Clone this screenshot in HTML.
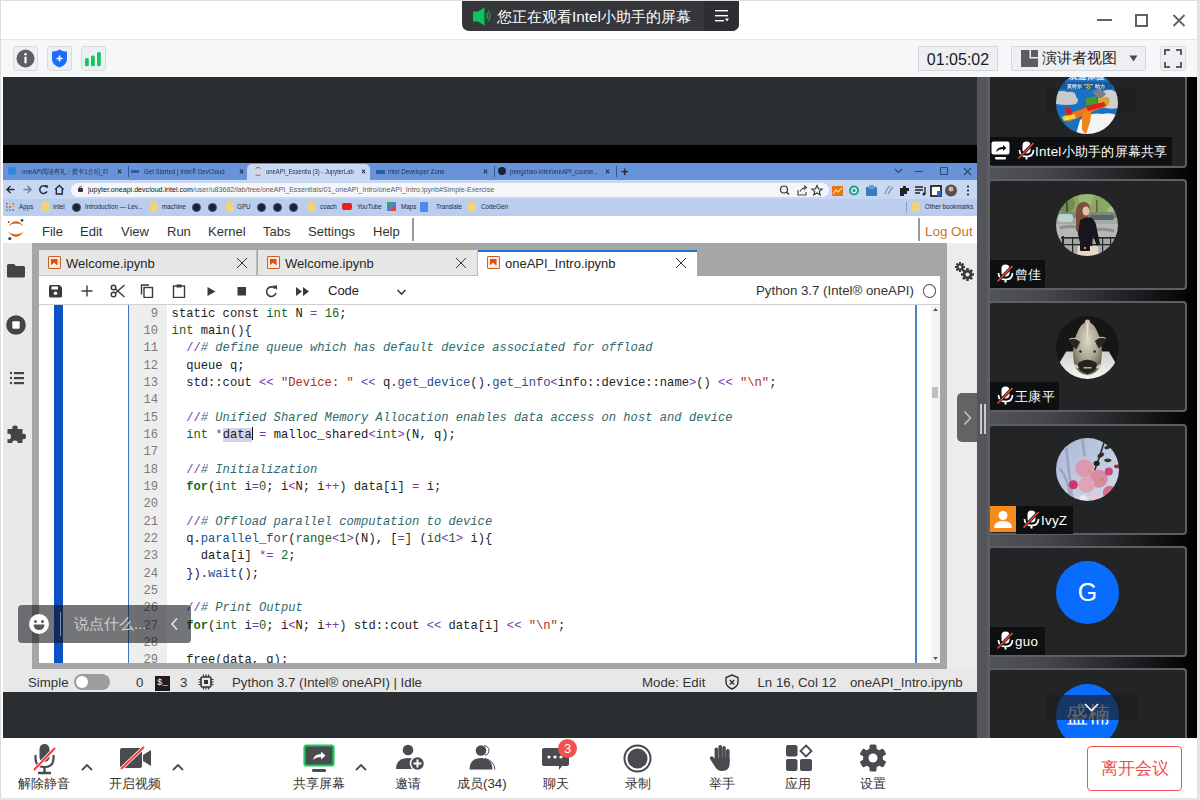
<!DOCTYPE html>
<html><head><meta charset="utf-8">
<style>
*{box-sizing:border-box}
html,body{margin:0;padding:0;width:1200px;height:800px;overflow:hidden;background:#fff;font-family:"Liberation Sans",sans-serif}
.a{position:absolute}
svg{display:block}
.tx{font-size:7.1px;line-height:14px;white-space:nowrap;overflow:hidden;transform:scaleX(0.86);transform-origin:0 0}
.ux{font-size:7.1px;line-height:14px;white-space:nowrap}
.bx span{font-size:6.3px;line-height:14px;color:#1d2a40;white-space:nowrap}
.fo{top:2px;width:8px;height:10px;background:#f0d27e;border-radius:1.5px}
.gl{top:3px;width:9px;height:9px;background:#1c2333;border-radius:50%;border:1px solid #3b4a66}
.mn{font-size:13px;line-height:16px;color:#333;white-space:nowrap}
.tb{font-size:13px;line-height:16px;color:#262626;white-space:nowrap}
.nb{width:13px;height:13px;background:#fbe9dc;border:1.5px solid #c4622c;border-radius:1px}
.nb::after{content:"";position:absolute;left:1.5px;top:1.5px;width:7px;height:7px;background:#e2500f;clip-path:polygon(0 0,100% 0,100% 100%,50% 62%,0 100%)}
.tbx{width:10px;height:10px;background:linear-gradient(45deg,transparent 45.5%,#333 45.5%,#333 54.5%,transparent 54.5%),linear-gradient(-45deg,transparent 45.5%,#333 45.5%,#333 54.5%,transparent 54.5%)}
.st{font-size:13.25px;line-height:16px;color:#333;white-space:nowrap}
.ln{height:17.35px;line-height:17.35px;font-family:"Liberation Mono",monospace;font-size:12.15px;white-space:pre;position:relative;color:#222}
.nu{position:absolute;left:0;width:29px;text-align:right;color:#7a7a7a}
.cd{position:absolute;left:42.6px}
.k{color:#146c28;font-weight:bold}.b{color:#156326}.o{color:#7a36b3}.n{color:#186226}.c{color:#33696d;font-style:italic}.s{color:#a8322a}.p{color:#1c4f96}.sel{background:#d5d3ea}.cur{display:inline-block;width:1px;height:13px;background:#111;vertical-align:-2px;margin-right:-1px}
.tile{left:11px;width:199px;height:111px;border:2px solid #5d5f63;border-radius:4px;background:#232426}
.lab{height:28px;background:#0e0f10}
.nm{font-size:13.4px;letter-spacing:0.25px;line-height:20px;color:#fff;white-space:nowrap}
.mic{width:18px;height:20px}
.bl{font-size:13.3px;line-height:18px;color:#333;white-space:nowrap}


</style></head><body>
<div class="a" style="left:0;top:0;width:1200px;height:800px;overflow:hidden">

<!-- frame borders -->
<div class="a" style="left:0;top:0;width:1200px;height:1px;background:#dedede"></div>
<div class="a" style="left:0;top:0;width:1px;height:800px;background:#dcdcdc"></div>
<div class="a" style="left:1197px;top:0;width:3px;height:800px;background:#e4e4e4"></div>
<div class="a" style="left:0;top:798px;width:1200px;height:2px;background:#e4e4e4"></div>

<!-- title bar -->
<div class="a" style="left:462px;top:1px;width:277px;height:30px;background:#35373b;border-radius:0 0 7px 7px;overflow:hidden">
  <div class="a" style="left:242px;top:0;width:35px;height:30px;background:#2c2e31"></div>
</div>
<svg class="a" style="left:470px;top:5px" width="26" height="22" viewBox="0 0 26 22">
  <path d="M3 6.5h5l6.5-4v18l-6.5-4H3z" fill="#0dc35c"/>
  <path d="M16.5 8q2 3 0 6M18 6q4 5 0 10" stroke="#0f9a4c" stroke-width="1.5" fill="none"/>
</svg>
<div class="a" style="left:497px;top:7px;font-size:15.3px;line-height:20px;color:#fff;white-space:nowrap">您正在观看Intel小助手的屏幕</div>
<svg class="a" style="left:714px;top:9px" width="16" height="14" viewBox="0 0 16 14">
  <rect x="1" y="1" width="13" height="1.4" fill="#fff"/>
  <rect x="1" y="6" width="13" height="1.4" fill="#fff"/>
  <rect x="1" y="11" width="9" height="1.4" fill="#fff"/>
  <path d="M11 9.5h4l-2 3z" fill="#fff"/>
</svg>

<!-- window controls -->
<div class="a" style="left:1097px;top:19px;width:15px;height:2px;background:#5f6166"></div>
<div class="a" style="left:1135px;top:14px;width:13px;height:13px;border:2px solid #5f6166"></div>
<svg class="a" style="left:1172px;top:14px" width="14" height="13" viewBox="0 0 14 13">
  <path d="M1.5 1l11 11M12.5 1l-11 11" stroke="#5f6166" stroke-width="1.8"/>
</svg>

<!-- top separator & toolbar -->
<div class="a" style="left:1px;top:39px;width:1196px;height:1px;background:#e6e6e8"></div>
<div class="a" style="left:1px;top:40px;width:1196px;height:37px;background:#f6f7f9"></div>

<!-- toolbar buttons -->
<div class="a" style="left:13px;top:46px;width:25px;height:25px;background:#eeeff2;border:1px solid #dadbdf;border-radius:3px"></div>
<svg class="a" style="left:16px;top:49px" width="19" height="19" viewBox="0 0 19 19">
  <circle cx="9.5" cy="9.5" r="9" fill="#5d5e62"/>
  <circle cx="9.5" cy="5.2" r="1.3" fill="#fff"/>
  <rect x="8.4" y="7.6" width="2.2" height="7" rx="1" fill="#fff"/>
</svg>
<div class="a" style="left:47px;top:46px;width:25px;height:25px;background:#eeeff2;border:1px solid #dadbdf;border-radius:3px"></div>
<svg class="a" style="left:51px;top:49px" width="17" height="19" viewBox="0 0 17 19">
  <path d="M8.5 0.5Q5 3 1 2.5V10Q1 16 8.5 18.5Q16 16 16 10V2.5Q12 3 8.5 0.5z" fill="#1a6eff"/>
  <path d="M8.5 6.5v6M5.5 9.5h6" stroke="#fff" stroke-width="1.6"/>
</svg>
<div class="a" style="left:81px;top:46px;width:25px;height:25px;background:#eeeff2;border:1px solid #dadbdf;border-radius:3px"></div>
<svg class="a" style="left:84px;top:51px" width="18" height="16" viewBox="0 0 18 16">
  <rect x="1" y="7" width="3.8" height="8.3" rx="1.5" fill="#0fc862"/>
  <rect x="7" y="4.5" width="3.8" height="10.8" rx="1.5" fill="#0fc862"/>
  <rect x="13" y="1" width="3.8" height="14.3" rx="1.5" fill="#0fc862"/>
</svg>

<div class="a" style="left:918px;top:46px;width:80px;height:25px;background:#eeeff2;border:1px solid #d6d7db"></div>
<div class="a" style="left:918px;top:50px;width:80px;text-align:center;font-size:16px;line-height:20px;color:#1b1b1b">01:05:02</div>

<div class="a" style="left:1011px;top:46px;width:135px;height:25px;background:#eeeff2;border:1px solid #d6d7db;border-radius:2px"></div>
<svg class="a" style="left:1021px;top:50px" width="17" height="17" viewBox="0 0 17 17">
  <path d="M0 0h8.5v8.5H17V17H0z" fill="#5c5d61"/>
  <rect x="10" y="0" width="7" height="7" fill="#5c5d61"/>
</svg>
<div class="a" style="left:1042px;top:48px;font-size:15.4px;line-height:20px;color:#1b1b1b;white-space:nowrap">演讲者视图</div>
<svg class="a" style="left:1129px;top:55px" width="9" height="7" viewBox="0 0 9 7"><path d="M0.5 0.5h8l-4 6z" fill="#4a4b4f"/></svg>

<div class="a" style="left:1160px;top:46px;width:26px;height:25px;background:#eeeff2;border:1px solid #dcdde0;border-radius:3px"></div>
<svg class="a" style="left:1164px;top:49px" width="18" height="19" viewBox="0 0 18 19">
  <path d="M1 6V1h5M12 1h5v5M17 13v5h-5M6 18H1v-5" stroke="#5c5d61" stroke-width="2" fill="none"/>
</svg>

<!-- main dark area -->
<div class="a" style="left:3px;top:77px;width:974px;height:661px;background:#2b2e31"></div>

<!-- SHARED SCREEN -->
<div id="share" class="a" style="left:3px;top:145px;width:974px;height:547px;overflow:hidden;background:#000">
<!-- black band -->
<div class="a" style="left:0;top:0;width:974px;height:18px;background:#000"></div>
<!-- tab strip -->
<div class="a" style="left:0;top:18px;width:974px;height:17px;background:#6893d8"></div>
<div class="a" style="left:244px;top:19px;width:123px;height:17px;background:#c9d9f3;border-radius:5px 5px 0 0"></div>
<div class="a tt" style="left:5px;top:22px;width:8px;height:8px;border-radius:2px;background:#2f8ad6"></div>
<div class="a tx" style="left:19px;top:20px;width:100px;color:#23324d">oneAPI阅读有礼：类卡1介绍_叫...</div>
<div class="a tx" style="left:114px;top:20px;color:#1d2a40;font-weight:bold">✕</div>
<div class="a" style="left:125px;top:21px;width:1px;height:11px;background:#38598f"></div>
<div class="a" style="left:128px;top:25px;width:8px;height:3px;background:#2a5ea8"></div>
<div class="a tx" style="left:141px;top:20px;color:#23324d">Get Started | Intel® DevCloud</div>
<div class="a tx" style="left:236px;top:20px;color:#1d2a40;font-weight:bold">✕</div>
<div class="a" style="left:251px;top:22px;width:8px;height:9px;border-radius:50%;border:1.6px solid #e0601f;border-left-color:transparent;border-right-color:transparent"></div>
<div class="a tx" style="left:263px;top:20px;width:112px;color:#1e2a3c;transform:scaleX(0.825)">oneAPI_Essentia (3) - JupyterLab</div>
<div class="a tx" style="left:358px;top:20px;color:#1d2a40;font-weight:bold">✕</div>
<div class="a" style="left:373px;top:25px;width:9px;height:4px;background:#2a5ea8"></div>
<div class="a tx" style="left:385px;top:20px;color:#23324d">Intel Developer Zone</div>
<div class="a tx" style="left:480px;top:20px;color:#1d2a40;font-weight:bold">✕</div>
<div class="a" style="left:491px;top:21px;width:1px;height:11px;background:#38598f"></div>
<div class="a" style="left:495px;top:22px;width:8px;height:8px;border-radius:50%;background:#1c2333"></div>
<div class="a tx" style="left:507px;top:20px;width:101px;color:#23324d">pengzhao-intel/oneAPI_course...</div>
<div class="a tx" style="left:602px;top:20px;color:#1d2a40;font-weight:bold">✕</div>
<div class="a" style="left:613px;top:21px;width:1px;height:11px;background:#38598f"></div>
<div class="a" style="left:618px;top:18px;font-size:13px;line-height:17px;color:#1d2a40;font-weight:bold">+</div>
<svg class="a" style="left:891px;top:23px" width="9" height="6" viewBox="0 0 9 6"><path d="M1 1l3.5 3.5L8 1" stroke="#2b4470" stroke-width="1.1" fill="none"/></svg>
<div class="a" style="left:912px;top:26px;width:8px;height:1px;background:#2b4470"></div>
<div class="a" style="left:937px;top:22px;width:8px;height:8px;border:1.3px solid #2b4470;border-radius:1px"></div>
<svg class="a" style="left:960px;top:22px" width="9" height="9" viewBox="0 0 9 9"><path d="M1 1l7 7M8 1l-7 7" stroke="#2b4470" stroke-width="1.1"/></svg>

<!-- address row -->
<div class="a" style="left:0;top:35px;width:974px;height:19px;background:#c9d8f2"></div>
<svg class="a" style="left:3px;top:38px" width="70" height="13" viewBox="0 0 70 13">
  <path d="M8.5 6.5H1M4.5 3L1 6.5 4.5 10" stroke="#1f2b3d" stroke-width="1.4" fill="none"/>
  <path d="M17.5 6.5h7M21.5 3l3.5 3.5L21.5 10" stroke="#6f7d93" stroke-width="1.4" fill="none"/>
  <path d="M40.5 4.2A3.8 3.8 0 1 0 41 8.3" stroke="#1f2b3d" stroke-width="1.5" fill="none"/><path d="M38.6 2.3h3.2v3.2z" fill="#1f2b3d"/>
  <path d="M49 6.5L53.3 2.5 57.6 6.5M50.3 5.5v5.5h6V5.5" stroke="#1f2b3d" stroke-width="1.4" fill="none"/>
</svg>
<div class="a" style="left:68px;top:38px;width:758px;height:14px;background:#f5f6f9;border-radius:7px"></div>
<div class="a" style="left:75px;top:43px;width:5px;height:4px;background:#333;border-radius:1px"></div>
<div class="a" style="left:75.8px;top:40.5px;width:3.4px;height:4px;border:1.1px solid #333;border-radius:2px 2px 0 0"></div>
<div class="a ux" style="left:85px;top:38px"><span style="color:#111">jupyter.oneapi.devcloud.intel.com</span><span style="color:#5b5f66">/user/u83682/lab/tree/oneAPI_Essentials/01_oneAPI_Intro/oneAPI_Intro.ipynb#Simple-Exercise</span></div>
<svg class="a" style="left:775px;top:39px" width="180" height="13" viewBox="0 0 180 13">
  <circle cx="6" cy="5.5" r="3.5" stroke="#333" stroke-width="1.2" fill="none"/><path d="M8.5 8l2.5 2.5" stroke="#333" stroke-width="1.4"/>
  <path d="M20 6v5h8V8M22 7.5q2-4 6.5-4M26 1.5l2.5 2-2.5 2" stroke="#444" stroke-width="1.1" fill="none"/>
  <path d="M39 1.5l1.5 3.3 3.6.3-2.8 2.3.9 3.5-3.2-1.9-3.2 1.9.9-3.5-2.8-2.3 3.6-.3z" stroke="#333" stroke-width="1.1" fill="none"/>
  <rect x="54" y="2" width="11" height="10" fill="#e8741c"/><path d="M55 10l3-4 2 2 4-4" stroke="#ffd9a0" stroke-width="1.2" fill="none"/>
  <circle cx="76" cy="6.5" r="5" fill="#15a288"/><circle cx="76" cy="6.5" r="2.3" stroke="#fff" stroke-width="1.2" fill="none"/>
  <rect x="88" y="3" width="11" height="9" rx="1" fill="#3a7abf"/><rect x="91" y="1" width="5" height="4" fill="#5fa0dd"/>
  <path d="M107 10q2-6 5-8M110 10q3-5 5-7" stroke="#7a8fb3" stroke-width="1.3" fill="none"/>
  <path d="M122 4h3v-2h3v2h3v3h-2v3h-3v2h-4z" fill="#222"/>
  <path d="M137 3h8M137 6h8M137 9h5M147 3v7" stroke="#222" stroke-width="1.3" fill="none"/><circle cx="146" cy="10" r="1.5" fill="#222"/>
  <rect x="153" y="2" width="10" height="10" stroke="#111" stroke-width="1.6" fill="#fff"/><rect x="159" y="7" width="4" height="5" fill="#2a6ad4"/>
  <circle cx="173" cy="6.5" r="6" fill="#5a4f4a"/><circle cx="173" cy="5" r="2.5" fill="#c8b3a5"/>
</svg>
<svg class="a" style="left:962px;top:39px" width="6" height="13" viewBox="0 0 6 13"><circle cx="3" cy="2.5" r="1.1" fill="#222"/><circle cx="3" cy="6.5" r="1.1" fill="#222"/><circle cx="3" cy="10.5" r="1.1" fill="#222"/></svg>

<!-- bookmarks row -->
<div class="a" style="left:0;top:54px;width:974px;height:17px;background:#bacdee"></div>
<div class="a bx" style="left:0;top:55px;width:974px;height:14px">
  <svg class="a" style="left:3px;top:3px" width="8" height="8" viewBox="0 0 10 10"><g fill="#e34">
  <rect x="0" y="0" width="2" height="2"/><rect x="4" y="0" width="2" height="2" fill="#fb0"/><rect x="8" y="0" width="2" height="2" fill="#3a4"/>
  <rect x="0" y="4" width="2" height="2" fill="#28f"/><rect x="4" y="4" width="2" height="2" fill="#e34"/><rect x="8" y="4" width="2" height="2" fill="#fb0"/>
  <rect x="0" y="8" width="2" height="2" fill="#3a4"/><rect x="4" y="8" width="2" height="2" fill="#28f"/><rect x="8" y="8" width="2" height="2" fill="#e34"/></g></svg>
  <span class="a" style="left:16px;top:0">Apps</span>
  <div class="a fo" style="left:38px"></div><span class="a" style="left:50px;top:0">intel</span>
  <div class="a gl" style="left:69px"></div><span class="a" style="left:82px;top:0">Introduction — Lev...</span>
  <div class="a fo" style="left:147px"></div><span class="a" style="left:159px;top:0">machine</span>
  <div class="a gl" style="left:189px"></div><div class="a gl" style="left:205px"></div>
  <div class="a fo" style="left:223px"></div><span class="a" style="left:234px;top:0">GPU</span>
  <div class="a gl" style="left:254px"></div><div class="a gl" style="left:270px"></div><div class="a gl" style="left:286px"></div>
  <div class="a fo" style="left:304px"></div><span class="a" style="left:317px;top:0">coach</span>
  <div class="a" style="left:339px;top:3px;width:10px;height:7px;border-radius:2px;background:#e62117"></div><span class="a" style="left:354px;top:0">YouTube</span>
  <div class="a" style="left:384px;top:2px;width:9px;height:9px;background:linear-gradient(135deg,#34a853 40%,#4285f4 40%,#4285f4 60%,#ea4335 60%)"></div><span class="a" style="left:398px;top:0">Maps</span>
  <div class="a" style="left:417px;top:2px;width:8px;height:10px;background:#4a8af4;border-radius:1px"></div><span class="a" style="left:433px;top:0">Translate</span>
  <div class="a fo" style="left:465px"></div><span class="a" style="left:478px;top:0">CodeGen</span>
  <div class="a" style="left:903px;top:2px;width:1px;height:11px;background:#8e9cb5"></div>
  <div class="a fo" style="left:909px"></div><span class="a" style="left:922px;top:0">Other bookmarks</span>
</div>
<!-- jupyter menubar -->
<div class="a" style="left:0;top:71px;width:974px;height:27px;background:#fff"></div>
<svg class="a" style="left:3px;top:74px" width="22" height="22" viewBox="0 0 22 22">
  <path d="M2.5 7Q10 -2.5 17.5 7Q10 2.2 2.5 7z" fill="#d6600f"/>
  <path d="M2.5 13Q10 22.5 17.5 13Q10 17.8 2.5 13z" fill="#d6600f"/>
  <circle cx="16" cy="1.4" r="1.4" fill="#444"/><circle cx="2.6" cy="3" r="0.9" fill="#555"/><circle cx="3.8" cy="19.6" r="1.6" fill="#444"/>
</svg>
<div class="a mn" style="left:39px;top:79px">File</div>
<div class="a mn" style="left:77px;top:79px">Edit</div>
<div class="a mn" style="left:118px;top:79px">View</div>
<div class="a mn" style="left:164px;top:79px">Run</div>
<div class="a mn" style="left:205px;top:79px">Kernel</div>
<div class="a mn" style="left:260px;top:79px">Tabs</div>
<div class="a mn" style="left:305px;top:79px">Settings</div>
<div class="a mn" style="left:370px;top:79px">Help</div>
<div class="a" style="left:409px;top:73px;width:2px;height:23px;background:#9a9a9a"></div>
<div class="a" style="left:915px;top:73px;width:2px;height:23px;background:#9a9a9a"></div>
<div class="a mn" style="left:922px;top:79px;color:#c8761c;font-size:13.4px">Log Out</div>

<!-- jupyter main bg -->
<div class="a" style="left:0;top:98px;width:974px;height:449px;background:#a6a6a6"></div>
<div class="a" style="left:0;top:98px;width:29px;height:426px;background:#e9e9e9"></div>
<div class="a" style="left:944px;top:98px;width:30px;height:426px;background:#ececec"></div>
<div class="a" style="left:0;top:524px;width:974px;height:23px;background:#e8e8e8"></div>

<!-- left sidebar icons -->
<svg class="a" style="left:3px;top:118px" width="20" height="180" viewBox="0 0 20 180">
  <path d="M1 2.5Q1 1 2.5 1H8l2 2h7.5Q19 3 19 4.5V13Q19 14.5 17.5 14.5h-15Q1 14.5 1 13z" fill="#444"/>
  <circle cx="10" cy="62" r="9.8" fill="#444"/><rect x="6.3" y="58.3" width="7.4" height="7.4" rx="1" fill="#fff"/>
  <circle cx="5" cy="110" r="1.2" fill="#444"/><circle cx="5" cy="115" r="1.2" fill="#444"/><circle cx="5" cy="120" r="1.2" fill="#444"/>
  <rect x="8" y="109" width="10" height="2.2" fill="#444"/><rect x="8" y="114" width="10" height="2.2" fill="#444"/><rect x="8" y="119" width="10" height="2.2" fill="#444"/>
  <path d="M1.5 166h5q-1-3.5 2.5-3.5t2.5 3.5h5v5q3.5-1 3.5 2.5t-3.5 2.5v5h-5q1-3.5-2.5-3.5t-2.5 3.5h-5v-5q3.5 1 3.5-2.5t-3.5-2.5z" fill="#444"/>
</svg>

<!-- right sidebar gear -->
<svg class="a" style="left:951px;top:116px" width="20" height="20" viewBox="0 0 20 20">
  <g fill="#3d3d3d">
  <circle cx="6" cy="6" r="3.6"/><circle cx="13.5" cy="13.5" r="4.8"/>
  <g transform="translate(6 6)"><rect x="-1" y="-5" width="2" height="10"/><rect x="-5" y="-1" width="10" height="2"/><rect x="-1" y="-5" width="2" height="10" transform="rotate(45)"/><rect x="-1" y="-5" width="2" height="10" transform="rotate(-45)"/></g>
  <g transform="translate(13.5 13.5)"><rect x="-1.3" y="-6.5" width="2.6" height="13"/><rect x="-6.5" y="-1.3" width="13" height="2.6"/><rect x="-1.3" y="-6.5" width="2.6" height="13" transform="rotate(45)"/><rect x="-1.3" y="-6.5" width="2.6" height="13" transform="rotate(-45)"/></g>
  </g>
  <circle cx="6" cy="6" r="1.4" fill="#ececec"/><circle cx="13.5" cy="13.5" r="2" fill="#ececec"/>
</svg>

<!-- tabs -->
<div class="a" style="left:36px;top:105px;width:218px;height:25px;background:#e6e6e6;border-right:1px solid #bdbdbd"></div>
<div class="a" style="left:255px;top:105px;width:220px;height:25px;background:#e6e6e6;border-right:1px solid #bdbdbd"></div>
<div class="a" style="left:475px;top:105px;width:219px;height:26px;background:#fff;border-top:2px solid #1976d2"></div>
<div class="a" style="left:36px;top:130px;width:439px;height:1px;background:#c4c4c4"></div>
<div class="a nb" style="left:45px;top:111px"></div>
<div class="a tb" style="left:63px;top:111px">Welcome.ipynb</div>
<div class="a tbx" style="left:234px;top:113px"></div>
<div class="a nb" style="left:264px;top:111px"></div>
<div class="a tb" style="left:282px;top:111px">Welcome.ipynb</div>
<div class="a tbx" style="left:453px;top:113px"></div>
<div class="a nb" style="left:484px;top:111px"></div>
<div class="a tb" style="left:502px;top:111px">oneAPI_Intro.ipynb</div>
<div class="a tbx" style="left:673px;top:113px"></div>

<!-- notebook panel -->
<div class="a" style="left:36px;top:131px;width:901px;height:387px;background:#fff;overflow:hidden">
  <!-- toolbar -->
  <div class="a" style="left:0;top:28px;width:901px;height:1px;background:#cfcfcf"></div>
  <svg class="a" style="left:10px;top:8px" width="380" height="14" viewBox="0 0 380 14">
    <g fill="#3b3b3b">
    <path d="M1.5 1h9l2.5 2.5v8.5q0 1.5-1.5 1.5h-10Q0 13.5 0 12V2.5Q0 1 1.5 1z"/>
    </g>
    <rect x="2.5" y="2.5" width="6.5" height="3" fill="#fff"/><circle cx="6.5" cy="9.3" r="1.8" fill="#fff"/>
    <path d="M38 1.5v11M32.5 7h11" stroke="#3b3b3b" stroke-width="1.4"/>
    <circle cx="64.5" cy="10.5" r="2.3" stroke="#3b3b3b" stroke-width="1.4" fill="none"/><circle cx="64.5" cy="3.5" r="2.3" stroke="#3b3b3b" stroke-width="1.4" fill="none"/>
    <path d="M66.5 5l9 8M66.5 9l9-8" stroke="#3b3b3b" stroke-width="1.5"/>
    <rect x="95" y="3.5" width="8.5" height="10" stroke="#3b3b3b" stroke-width="1.4" fill="none"/><path d="M92.5 10.5V1h7.5" stroke="#3b3b3b" stroke-width="1.4" fill="none"/>
    <rect x="124.5" y="2" width="11" height="11.5" stroke="#3b3b3b" stroke-width="1.4" fill="none"/><rect x="127.5" y="0.5" width="5" height="3" fill="#3b3b3b"/>
    <path d="M158.5 3l8 4.5-8 4.5z" fill="#3b3b3b"/>
    <rect x="188.5" y="3" width="8.5" height="8.5" fill="#3b3b3b"/>
    <path d="M226 4.5A4.8 4.8 0 1 0 227 9" stroke="#3b3b3b" stroke-width="1.6" fill="none"/><path d="M223.5 1.5h4.5v4.5z" fill="#3b3b3b"/>
    <path d="M247 3l6 4.5-6 4.5zM254 3l6 4.5-6 4.5z" fill="#3b3b3b"/>
    <path d="M348.5 6l4 4 4-4" stroke="#3b3b3b" stroke-width="1.6" fill="none"/>
  </svg>
  <div class="a tb" style="left:289px;top:6.5px;color:#222">Code</div>
  <div class="a tb" style="left:717px;top:6.5px;color:#333;font-size:13.25px">Python 3.7 (Intel® oneAPI)</div>
  <div class="a" style="left:883.5px;top:8px;width:13.5px;height:13.5px;border:1.5px solid #333;border-radius:50%"></div>

  <!-- cell -->
  <div class="a" style="left:15px;top:29px;width:9px;height:360px;background:#0d52c4"></div>
  <div class="a" style="left:89px;top:29px;width:1px;height:360px;background:#3d74c0"></div>
  <div class="a" style="left:876px;top:29px;width:1.5px;height:360px;background:#4a80c8"></div>
  <div class="a" style="left:90px;top:29px;width:38px;height:360px;background:#eeeeee"></div>
  <!-- scrollbar -->
  <div class="a" style="left:892px;top:29px;width:9px;height:358px;background:#f4f4f4"></div>
  <svg class="a" style="left:893px;top:31px" width="7" height="5" viewBox="0 0 7 5"><path d="M1 4h5L3.5 1z" fill="#555"/></svg>
  <div class="a" style="left:893px;top:111px;width:6px;height:11px;background:#c0c0c0"></div>
  <svg class="a" style="left:893px;top:380px" width="7" height="5" viewBox="0 0 7 5"><path d="M1 1h5L3.5 4z" fill="#555"/></svg>

  <div id="code" class="a" style="left:90px;top:29px;width:786px;height:358px;overflow:hidden"><div class="a" style="left:0;top:0.5px;width:786px"><div class="ln"><span class="nu">9</span><span class="cd">static const <span class="b">int</span> N <span class="o">=</span> <span class="n">16</span>;</span></div>
<div class="ln"><span class="nu">10</span><span class="cd"><span class="b">int</span> main(){</span></div>
<div class="ln"><span class="nu">11</span><span class="cd">  <span class="o">//</span><span class="c"># define queue which has default device associated for offload</span></span></div>
<div class="ln"><span class="nu">12</span><span class="cd">  queue q;</span></div>
<div class="ln"><span class="nu">13</span><span class="cd">  std::cout <span class="o">&lt;&lt;</span> <span class="s">&quot;Device: &quot;</span> <span class="o">&lt;&lt;</span> q.<span class="p">get_device</span>().<span class="p">get_info</span><span class="o">&lt;</span>info::device::name<span class="o">&gt;</span>() <span class="o">&lt;&lt;</span> <span class="s">&quot;\n&quot;</span>;</span></div>
<div class="ln"><span class="nu">14</span><span class="cd"></span></div>
<div class="ln"><span class="nu">15</span><span class="cd">  <span class="o">//</span><span class="c"># Unified Shared Memory Allocation enables data access on host and device</span></span></div>
<div class="ln"><span class="nu">16</span><span class="cd">  <span class="b">int</span> <span class="o">*</span><span class="sel">data</span><span class="cur"></span> <span class="o">=</span> malloc_shared<span class="o">&lt;</span><span class="b">int</span><span class="o">&gt;</span>(N, q);</span></div>
<div class="ln"><span class="nu">17</span><span class="cd"></span></div>
<div class="ln"><span class="nu">18</span><span class="cd">  <span class="o">//</span><span class="c"># Initialization</span></span></div>
<div class="ln"><span class="nu">19</span><span class="cd">  <span class="k">for</span>(<span class="b">int</span> i<span class="o">=</span><span class="n">0</span>; i<span class="o">&lt;</span>N; i<span class="o">++</span>) data[i] <span class="o">=</span> i;</span></div>
<div class="ln"><span class="nu">20</span><span class="cd"></span></div>
<div class="ln"><span class="nu">21</span><span class="cd">  <span class="o">//</span><span class="c"># Offload parallel computation to device</span></span></div>
<div class="ln"><span class="nu">22</span><span class="cd">  q.<span class="p">parallel_for</span>(<span class="b">range</span><span class="o">&lt;</span><span class="n">1</span><span class="o">&gt;</span>(N), [<span class="o">=</span>] (<span class="b">id</span><span class="o">&lt;</span><span class="n">1</span><span class="o">&gt;</span> i){</span></div>
<div class="ln"><span class="nu">23</span><span class="cd">    data[i] <span class="o">*=</span> <span class="n">2</span>;</span></div>
<div class="ln"><span class="nu">24</span><span class="cd">  }).<span class="p">wait</span>();</span></div>
<div class="ln"><span class="nu">25</span><span class="cd"></span></div>
<div class="ln"><span class="nu">26</span><span class="cd">  <span class="o">//</span><span class="c"># Print Output</span></span></div>
<div class="ln"><span class="nu">27</span><span class="cd">  <span class="k">for</span>(<span class="b">int</span> i<span class="o">=</span><span class="n">0</span>; i<span class="o">&lt;</span>N; i<span class="o">++</span>) std::cout <span class="o">&lt;&lt;</span> data[i] <span class="o">&lt;&lt;</span> <span class="s">&quot;\n&quot;</span>;</span></div>
<div class="ln"><span class="nu">28</span><span class="cd"></span></div>
<div class="ln"><span class="nu">29</span><span class="cd">  free(data, q);</span></div></div></div>
</div>
<!-- status bar -->
<div class="a st" style="left:25px;top:529.5px">Simple</div>
<div class="a" style="left:71px;top:529px;width:36px;height:16px;border-radius:8px;background:#9d9d9d"></div>
<div class="a" style="left:73px;top:531px;width:12px;height:12px;border-radius:50%;background:#fff"></div>
<div class="a st" style="left:133px;top:529.5px">0</div>
<div class="a" style="left:152px;top:531px;width:15px;height:15px;background:#1e1e1e;color:#fff;font-size:9px;line-height:15px;text-align:center;font-family:'Liberation Mono',monospace">$_</div>
<div class="a st" style="left:177px;top:529.5px">3</div>
<svg class="a" style="left:195px;top:529px" width="16" height="16" viewBox="0 0 16 16">
  <rect x="3" y="3" width="10" height="10" rx="1.5" stroke="#333" stroke-width="1.6" fill="none"/>
  <rect x="6" y="6" width="4" height="4" fill="#333"/>
  <path d="M5.5 0.5v2.5M8 0.5v2.5M10.5 0.5v2.5M5.5 13v2.5M8 13v2.5M10.5 13v2.5M0.5 5.5h2.5M0.5 8h2.5M0.5 10.5h2.5M13 5.5h2.5M13 8h2.5M13 10.5h2.5" stroke="#333" stroke-width="1.2"/>
</svg>
<div class="a st" style="left:229px;top:529.5px">Python 3.7 (Intel® oneAPI) | Idle</div>
<div class="a st" style="left:639px;top:529.5px">Mode: Edit</div>
<svg class="a" style="left:721px;top:529px" width="16" height="16" viewBox="0 0 16 16">
  <path d="M8 1L14 3.5V8Q14 12.5 8 15Q2 12.5 2 8V3.5z" stroke="#333" stroke-width="1.4" fill="none"/>
  <path d="M5.8 6l4.4 4.4M10.2 6l-4.4 4.4" stroke="#333" stroke-width="1.4"/>
</svg>
<div class="a st" style="left:754.5px;top:529.5px">Ln 16, Col 12</div>
<div class="a st" style="left:847px;top:529.5px">oneAPI_Intro.ipynb</div>

<!-- chat overlay -->
<div class="a" style="left:15px;top:460px;width:173px;height:38px;border-radius:4px;background:rgba(16,18,22,0.58)"></div>
<svg class="a" style="left:26px;top:469px" width="20" height="20" viewBox="0 0 20 20">
  <circle cx="10" cy="10" r="10" fill="#fff"/>
  <circle cx="6.5" cy="7.5" r="1.5" fill="#58595c"/><circle cx="13.5" cy="7.5" r="1.5" fill="#58595c"/>
  <path d="M4.5 10.5h11Q15 16 10 16T4.5 10.5z" fill="#58595c"/>
</svg>
<div class="a" style="left:57px;top:467px;width:1px;height:24px;background:#8a8b8e"></div>
<div class="a" style="left:71px;top:469px;font-size:15px;line-height:20px;color:#cfd0d2;white-space:nowrap">说点什么...</div>
<svg class="a" style="left:167px;top:472px" width="9" height="14" viewBox="0 0 9 14"><path d="M7 1.5L2 7l5 5.5" stroke="#e6e6e6" stroke-width="1.6" fill="none"/></svg>

</div>

<!-- handle -->
<div class="a" style="left:957px;top:393px;width:20px;height:49px;background:#636363;border-radius:5px 0 0 5px"></div>
<svg class="a" style="left:962px;top:410px" width="10" height="16" viewBox="0 0 10 16"><path d="M2.5 1.5L8.5 8l-6 6.5" stroke="#c3c3c3" stroke-width="1.6" fill="none"/></svg>
<!-- SIDEBAR -->
<div id="side" class="a" style="left:977px;top:77px;width:220px;height:661px;overflow:hidden;background:linear-gradient(90deg,#53565a 0%,#46484c 30%,#1f2022 70%,#000 100%)">
<!-- splitter strip -->
<div class="a" style="left:0;top:0;width:10px;height:661px;background:#53555a"></div>
<div class="a" style="left:10px;top:0;width:3px;height:661px;background:#5c5e62"></div>
<div class="a" style="left:3px;top:327px;width:1.5px;height:30px;background:#c8c9cb"></div>
<div class="a" style="left:7px;top:327px;width:1.5px;height:30px;background:#c8c9cb"></div>

<!-- tiles -->
<div class="a tile" style="top:-20px"></div>
<div class="a tile" style="top:102px"></div>
<div class="a tile" style="top:224px"></div>
<div class="a tile" style="top:347px"></div>
<div class="a tile" style="top:469px"></div>
<div class="a tile" style="top:591px"></div>

<!-- avatar 1: intel assistant -->
<div class="a" style="left:70px;top:11px;width:89px;height:25px;background:#1e1f21"></div>
<svg class="a" style="left:79px;top:-5px" width="62" height="62" viewBox="0 0 62 62">
  <defs><clipPath id="c1"><circle cx="31" cy="31" r="31"/></clipPath></defs>
  <defs><filter id="bl1" x="-10%" y="-10%" width="120%" height="120%"><feGaussianBlur stdDeviation="0.7"/></filter></defs><g clip-path="url(#c1)"><g filter="url(#bl1)">
   <rect width="62" height="62" fill="#1a70c2"/>
   <rect y="0" width="62" height="8" fill="#2a86d6"/>
   <rect x="4" y="10" width="52" height="7" fill="#185a9c"/>
   <path d="M0 20q6-2 12 0q8-1 8 5q4 3 0 7q-8 2-20 0z" fill="#c9c9c9"/>
   <path d="M46 20q6-4 12-1q5 2 4 6v11q-8 2-16-1q-3-4 0-8q-3-5 0-7z" fill="#cfcfcf"/>
   <path d="M24 48q10-8 22-6q10-2 16 2v18H20z" fill="#f4f4f4"/>
   <path d="M6 44l40-14l4 4l-38 16z" fill="#f2701e"/>
   <path d="M9 36l5 0l4 8l-6 2z" fill="#e01c1c"/>
   <path d="M6 45l12-3l2 4l-12 3z" fill="#e8e23a"/>
   <path d="M26 40l10-4l-2 14l-4 12l-4-4z" fill="#f0841a"/>
   <path d="M30 26l10-2l2 10l-8 4l-4-4z" fill="#4a9a2e"/>
   <path d="M36 20l8-4l6 6l-6 6z" fill="#7a7f86"/>
   <path d="M42 26l10-1q4 5-2 10l-8 1z" fill="#d4a531"/>
   <path d="M30 34l18-4l2 4l-18 5z" fill="#d62020"/>
   <text x="31" y="7" font-size="8.5" fill="#d8eeff" text-anchor="middle" font-family="Liberation Sans" font-weight="bold" font-style="italic">双速体验</text>
   <text x="30" y="15.5" font-size="5" fill="#e6eef5" text-anchor="middle" font-family="Liberation Sans" font-weight="bold">英特尔 "<tspan fill="#e9e23a">芯</tspan>" 助力</text>
  </g></g>
</svg>
<div class="a lab" style="left:13px;top:60px;width:182px"></div>
<svg class="a" style="left:14px;top:64px" width="19" height="19" viewBox="0 0 19 19">
  <rect x="0.5" y="0.5" width="18" height="13" rx="2" fill="#fff"/>
  <rect x="4" y="16" width="11" height="2.5" rx="1" fill="#fff"/>
  <path d="M5 11q1-5 7-5V4l3.5 3L12 10V8q-4 0-7 3z" fill="#111"/>
</svg>
<svg class="a" style="left:40px;top:64px" width="18" height="20" viewBox="0 0 18 20"><rect x="5.5" y="0.5" width="8" height="12" rx="4" fill="#fff"/><path d="M2.5 9q0 6.5 7 6.5t7-6.5" stroke="#fff" stroke-width="1.7" fill="none"/><path d="M9.5 15.5v3" stroke="#fff" stroke-width="2"/><path d="M1.5 17.5L16.5 2" stroke="#0e0f10" stroke-width="3"/><path d="M1.5 17.5L16.5 2" stroke="#e8443a" stroke-width="1.7"/></svg>
<div class="a nm" style="left:58px;top:64.5px">Intel小助手的屏幕共享</div>

<!-- avatar 2 -->
<svg class="a" style="left:79px;top:117px" width="62" height="62" viewBox="0 0 62 62">
  <defs><clipPath id="c2"><circle cx="31" cy="31" r="31"/></clipPath></defs>
  <defs><filter id="bl2" x="-10%" y="-10%" width="120%" height="120%"><feGaussianBlur stdDeviation="0.7"/></filter></defs><g clip-path="url(#c2)"><g filter="url(#bl2)">
   <rect width="62" height="62" fill="#a6a8a6"/>
   <rect y="0" width="62" height="22" fill="#8da56a"/>
   <circle cx="10" cy="10" r="9" fill="#6f8f4e"/><circle cx="30" cy="4" r="8" fill="#9ab977"/><circle cx="46" cy="8" r="10" fill="#88a765"/><circle cx="58" cy="18" r="7" fill="#a4bd82"/>
   <rect x="10" y="8" width="2" height="18" fill="#4e5040"/><rect x="40" y="6" width="1.5" height="18" fill="#5e6050"/>
   <rect x="0" y="18" width="62" height="6" fill="#7c8a76"/>
   <rect x="2" y="20" width="15" height="8" rx="3" fill="#bcd2d0"/><rect x="34" y="21" width="24" height="5" rx="2" fill="#56666c"/>
   <path d="M0 30h62v14H0z" fill="#b6b8b5"/>
   <path d="M4 34q10-3 20 0M40 36q8-2 18 1" stroke="#8e908d" stroke-width="3" fill="none"/>
   <rect x="5" y="43" width="57" height="1.6" fill="#262626"/><rect x="5" y="50" width="57" height="1.3" fill="#262626"/>
   <rect x="6" y="42" width="2" height="20" fill="#262626"/><rect x="16" y="44" width="1.2" height="18" fill="#262626"/><rect x="46" y="44" width="1.2" height="18" fill="#262626"/><rect x="54" y="44" width="1.2" height="18" fill="#262626"/>
   <path d="M20 16q2-9 9-8q5 1 5 8l-2 6l-6 8l-3 10l-3-4z" fill="#7b4d3a"/>
   <ellipse cx="30" cy="17" rx="3.6" ry="4.6" fill="#e2c3aa"/>
   <path d="M24 26q6-4 12-2q4 3 5 12l3 14l-3 2l-4-10l-1 12H25l-3-14z" fill="#17181c"/>
   <path d="M22 52h20l1 10H21z" fill="#e4d8c4"/>
   <rect x="24" y="49" width="10" height="8" rx="1" fill="#15161a"/><rect x="28" y="53" width="2" height="2" fill="#c9a24a"/>
  </g></g>
</svg>
<div class="a lab" style="left:13px;top:183px;width:55px"></div>
<svg class="a" style="left:19px;top:187px" width="18" height="20" viewBox="0 0 18 20"><rect x="5.5" y="0.5" width="8" height="12" rx="4" fill="#fff"/><path d="M2.5 9q0 6.5 7 6.5t7-6.5" stroke="#fff" stroke-width="1.7" fill="none"/><path d="M9.5 15.5v3" stroke="#fff" stroke-width="2"/><path d="M1.5 17.5L16.5 2" stroke="#0e0f10" stroke-width="3"/><path d="M1.5 17.5L16.5 2" stroke="#e8443a" stroke-width="1.7"/></svg>
<div class="a nm" style="left:38px;top:187.5px">曾佳</div>

<!-- avatar 3 -->
<svg class="a" style="left:79px;top:239px" width="63" height="63" viewBox="0 0 62 62">
  <defs><clipPath id="c3"><circle cx="31" cy="31" r="31"/></clipPath>
  <radialGradient id="g3" cx="0.5" cy="0.35" r="0.6"><stop offset="0" stop-color="#dcd8c6"/><stop offset="0.6" stop-color="#aaa690"/><stop offset="1" stop-color="#6c6a5c"/></radialGradient>
  <linearGradient id="w3" x1="0" y1="0" x2="0" y2="1"><stop offset="0" stop-color="#cfcfcb"/><stop offset="1" stop-color="#f6f6f2"/></linearGradient></defs>
  <defs><filter id="bl3" x="-10%" y="-10%" width="120%" height="120%"><feGaussianBlur stdDeviation="0.7"/></filter></defs><g clip-path="url(#c3)"><g filter="url(#bl3)">
   <rect width="62" height="62" fill="#161614"/>
   <path d="M0 52L10 35h42l10 17v10H0z" fill="url(#w3)"/>
   <path d="M18 48q-4-20 4-34q4-8 9-8t9 8q8 14 4 34q-4 10-13 10t-13-10z" fill="url(#g3)"/>
   <path d="M13 23q6-3 11 2l-4 8q-6-4-7-10z" fill="#2a2824"/><path d="M13 23q6-3 11 2" stroke="#c9c5b2" stroke-width="1" fill="none"/>
   <path d="M49 22q-6-3-11 2l4 8q6-4 7-10z" fill="#2a2824"/><path d="M49 22q-6-3-11 2" stroke="#c9c5b2" stroke-width="1" fill="none"/>
   <circle cx="31" cy="6" r="2.5" fill="#c9c5b0"/>
   <path d="M30 8h2l-.5 14h-1z" fill="#e8e5d6"/>
   <path d="M22 46q9-6 18 0q2 8-9 11q-11-3-9-11z" fill="#26231f"/>
   <path d="M27 51h8" stroke="#d8d4c4" stroke-width="1.2"/>
   <path d="M18 48l4 3M44 48l-4 3" stroke="#d8d4c0" stroke-width="2"/>
   <circle cx="24" cy="35" r="1.2" fill="#222"/><circle cx="38" cy="35" r="1.2" fill="#222"/>
  </g></g>
</svg>
<div class="a lab" style="left:13px;top:305px;width:69px"></div>
<svg class="a" style="left:19px;top:309px" width="18" height="20" viewBox="0 0 18 20"><rect x="5.5" y="0.5" width="8" height="12" rx="4" fill="#fff"/><path d="M2.5 9q0 6.5 7 6.5t7-6.5" stroke="#fff" stroke-width="1.7" fill="none"/><path d="M9.5 15.5v3" stroke="#fff" stroke-width="2"/><path d="M1.5 17.5L16.5 2" stroke="#0e0f10" stroke-width="3"/><path d="M1.5 17.5L16.5 2" stroke="#e8443a" stroke-width="1.7"/></svg>
<div class="a nm" style="left:38px;top:309.5px">王康平</div>

<!-- avatar 4 -->
<svg class="a" style="left:79px;top:361px" width="63" height="63" viewBox="0 0 62 62">
  <defs><clipPath id="c4"><circle cx="31" cy="31" r="31"/></clipPath>
  <linearGradient id="g4" x1="0" y1="0" x2="1" y2="1"><stop offset="0" stop-color="#aab8d6"/><stop offset="1" stop-color="#d4dcea"/></linearGradient></defs>
  <defs><filter id="bl4" x="-10%" y="-10%" width="120%" height="120%"><feGaussianBlur stdDeviation="0.7"/></filter></defs><g clip-path="url(#c4)"><g filter="url(#bl4)">
   <rect width="62" height="62" fill="url(#g4)"/>
   <path d="M10 10l6 50M26 0l2 18M4 30q8 10 10 30" stroke="#8a88aa" stroke-width="2.5" opacity="0.55" fill="none"/>
   <path d="M48 2q-4 14-10 30" stroke="#3a2a2a" stroke-width="1.6" fill="none"/>
   <ellipse cx="51" cy="9" rx="3.5" ry="1.8" fill="#22301e" transform="rotate(-20 51 9)"/>
   <ellipse cx="44" cy="17" rx="3.5" ry="2" fill="#25331f" transform="rotate(-30 44 17)"/>
   <ellipse cx="51" cy="22" rx="3.5" ry="1.8" fill="#2a3a24"/>
   <ellipse cx="40" cy="25" rx="3" ry="2.5" fill="#1e2a1c"/>
   <ellipse cx="60" cy="28" rx="3" ry="1.8" fill="#9a3050"/>
   <circle cx="28" cy="30" r="9" fill="#dc9ab2"/><circle cx="42" cy="40" r="9" fill="#d88aa6"/>
   <circle cx="30" cy="46" r="8" fill="#e0a4b8"/><circle cx="53" cy="54" r="7" fill="#cf6f92"/>
   <circle cx="17" cy="46" r="4.5" fill="#c83a66"/><circle cx="52" cy="33" r="4" fill="#c84a72"/>
   <circle cx="40" cy="60" r="6" fill="#e9c8d4"/><circle cx="27" cy="60" r="4" fill="#f0e6ee"/>
   <circle cx="33" cy="33" r="1.5" fill="#c9a050"/><circle cx="45" cy="41" r="1.5" fill="#b98a50"/>
  </g></g>
</svg>
<div class="a" style="left:13px;top:429px;width:26px;height:26px;background:#f58a1f"></div>
<svg class="a" style="left:16px;top:433px" width="20" height="19" viewBox="0 0 20 19">
  <circle cx="10" cy="5.5" r="4.5" fill="#fff"/><path d="M1 18q0-7 9-7t9 7z" fill="#fff"/>
</svg>
<div class="a lab" style="left:39px;top:429px;width:57px"></div>
<svg class="a" style="left:45px;top:433px" width="18" height="20" viewBox="0 0 18 20"><rect x="5.5" y="0.5" width="8" height="12" rx="4" fill="#fff"/><path d="M2.5 9q0 6.5 7 6.5t7-6.5" stroke="#fff" stroke-width="1.7" fill="none"/><path d="M9.5 15.5v3" stroke="#fff" stroke-width="2"/><path d="M1.5 17.5L16.5 2" stroke="#0e0f10" stroke-width="3"/><path d="M1.5 17.5L16.5 2" stroke="#e8443a" stroke-width="1.7"/></svg>
<div class="a nm" style="left:64px;top:433.5px">IvyZ</div>

<!-- avatar 5 -->
<div class="a" style="left:79px;top:484px;width:63px;height:63px;border-radius:50%;background:#0a6cff;color:#fff;font-size:25px;line-height:63px;text-align:center">G</div>
<div class="a lab" style="left:13px;top:550px;width:55px"></div>
<svg class="a" style="left:19px;top:554px" width="18" height="20" viewBox="0 0 18 20"><rect x="5.5" y="0.5" width="8" height="12" rx="4" fill="#fff"/><path d="M2.5 9q0 6.5 7 6.5t7-6.5" stroke="#fff" stroke-width="1.7" fill="none"/><path d="M9.5 15.5v3" stroke="#fff" stroke-width="2"/><path d="M1.5 17.5L16.5 2" stroke="#0e0f10" stroke-width="3"/><path d="M1.5 17.5L16.5 2" stroke="#e8443a" stroke-width="1.7"/></svg>
<div class="a nm" style="left:38px;top:554.5px">guo</div>

<!-- avatar 6 -->
<div class="a" style="left:79px;top:607px;width:63px;height:63px;border-radius:50%;background:#0a6cff;overflow:hidden"></div>
<div class="a" style="left:79px;top:607px;width:63px;font-size:22px;line-height:26px;padding-top:18px;text-align:center;color:#fff;white-space:nowrap">盛楠</div>
<div class="a" style="left:70px;top:618px;width:90px;height:25px;border-radius:3px;background:rgba(28,28,30,0.68)"></div>
<svg class="a" style="left:107px;top:626px" width="15" height="9" viewBox="0 0 15 9"><path d="M1 1l6.5 6.5L14 1" stroke="#fff" stroke-width="1.6" fill="none"/></svg>

</div>

<!-- BOTTOM BAR -->
<div id="bottom" class="a" style="left:1px;top:738px;width:1196px;height:60px;background:#fff">
<!-- mic -->
<svg class="a" style="left:31px;top:5px" width="26" height="32" viewBox="0 0 26 32">
  <rect x="7.5" y="1" width="10" height="18" rx="5" fill="#4a4b50"/>
  <path d="M3.5 12v3q0 9 9 9t9-9v-3" stroke="#4a4b50" stroke-width="2.2" fill="none"/>
  <path d="M12.5 24v5M6 30h13" stroke="#4a4b50" stroke-width="2.4"/>
  <path d="M2 27L23 5" stroke="#fff" stroke-width="3.5"/>
  <path d="M2 27L23 5" stroke="#f33" stroke-width="1.9"/>
</svg>
<div class="a bl" style="left:17px;top:36.5px">解除静音</div>
<svg class="a" style="left:80px;top:25px" width="12" height="8" viewBox="0 0 12 8"><path d="M1 7l5-5 5 5" stroke="#4a4b50" stroke-width="1.8" fill="none"/></svg>
<!-- video -->
<svg class="a" style="left:118px;top:8px" width="34" height="24" viewBox="0 0 34 24">
  <rect x="1" y="2" width="22" height="20" rx="2" fill="#4a4b50"/>
  <path d="M24 9l8-5v16l-8-5z" fill="#4a4b50"/>
  <path d="M2 23L25 1" stroke="#fff" stroke-width="3.5"/>
  <path d="M2 23L25 1" stroke="#f33" stroke-width="1.9"/>
</svg>
<div class="a bl" style="left:108px;top:36.5px">开启视频</div>
<svg class="a" style="left:171px;top:25px" width="12" height="8" viewBox="0 0 12 8"><path d="M1 7l5-5 5 5" stroke="#4a4b50" stroke-width="1.8" fill="none"/></svg>
<!-- share -->
<svg class="a" style="left:302px;top:6px" width="32" height="29" viewBox="0 0 32 29">
  <rect x="1.5" y="1.5" width="29" height="20" rx="2" fill="#4a4b50" stroke="#1ccc5b" stroke-width="2.2"/>
  <rect x="9" y="25" width="14" height="3" rx="1.2" fill="#4a4b50"/>
  <path d="M10 16q1-6 8-6V7.5l4.5 4L18 15.5V13q-5 0-8 3z" fill="#fff"/>
</svg>
<div class="a bl" style="left:292px;top:36.5px">共享屏幕</div>
<svg class="a" style="left:354px;top:25px" width="12" height="8" viewBox="0 0 12 8"><path d="M1 7l5-5 5 5" stroke="#4a4b50" stroke-width="1.8" fill="none"/></svg>
<!-- invite -->
<svg class="a" style="left:394px;top:6px" width="30" height="27" viewBox="0 0 30 27">
  <circle cx="13" cy="6" r="5.3" fill="#4a4b50"/>
  <path d="M1 25q0-11 12-11q6 0 9 3v8z" fill="#4a4b50"/>
  <circle cx="22.5" cy="19.5" r="7" fill="#4a4b50" stroke="#fff" stroke-width="1.5"/>
  <path d="M22.5 15.5v8M18.5 19.5h8" stroke="#fff" stroke-width="2"/>
</svg>
<div class="a bl" style="left:394px;top:36.5px">邀请</div>
<!-- members -->
<svg class="a" style="left:467px;top:6px" width="30" height="27" viewBox="0 0 30 27">
  <path d="M16 1.5q5 1 5 5t-4 5" stroke="#4a4b50" stroke-width="1" fill="none"/>
  <path d="M17 14.5q9 2 10 11" stroke="#4a4b50" stroke-width="1" fill="none"/>
  <circle cx="13" cy="6.5" r="5.3" fill="#4a4b50"/>
  <path d="M1.5 25.5q0-11.5 11.5-11.5t11.5 11.5z" fill="#4a4b50"/>
</svg>
<div class="a bl" style="left:456px;top:36.5px">成员(34)</div>
<!-- chat -->
<svg class="a" style="left:541px;top:9px" width="28" height="25" viewBox="0 0 28 25">
  <path d="M2 1h23q2 0 2 2v14q0 2-2 2h-5l-3 4v-4H2q-2 0-2-2V3q0-2 2-2z" fill="#4a4b50"/>
  <circle cx="7" cy="10" r="1.6" fill="#fff"/><circle cx="13" cy="10" r="1.6" fill="#fff"/><circle cx="19" cy="10" r="1.6" fill="#fff"/>
</svg>
<div class="a" style="left:557px;top:1px;width:19px;height:19px;border-radius:50%;background:#f4504f;color:#fff;font-size:13px;line-height:19px;text-align:center">3</div>
<div class="a bl" style="left:542px;top:36.5px">聊天</div>
<!-- record -->
<svg class="a" style="left:622px;top:6px" width="29" height="29" viewBox="0 0 29 29">
  <circle cx="14.5" cy="14.5" r="13" stroke="#4a4b50" stroke-width="2" fill="none"/>
  <circle cx="14.5" cy="14.5" r="10" fill="#4a4b50"/>
</svg>
<div class="a bl" style="left:624px;top:36.5px">录制</div>
<!-- hand -->
<svg class="a" style="left:708px;top:6px" width="22" height="28" viewBox="0 0 22 28">
  <g fill="#4a4b50">
  <rect x="5.6" y="3.5" width="3.6" height="15" rx="1.8"/>
  <rect x="9.4" y="1" width="3.6" height="17" rx="1.8"/>
  <rect x="13.2" y="2" width="3.6" height="16" rx="1.8"/>
  <rect x="17" y="5" width="3.6" height="14" rx="1.8"/>
  <path d="M5.6 14h15v6q0 7-7.5 7q-5 0-7.5-5l-4.5-7q-1-2 1-2.6q1.5-.4 2.5 1.2l1 1.4z"/>
  </g>
</svg>
<div class="a bl" style="left:708px;top:36.5px">举手</div>
<!-- apps -->
<svg class="a" style="left:784px;top:6px" width="28" height="28" viewBox="0 0 28 28">
  <rect x="1" y="1" width="11.5" height="11.5" rx="2" fill="#4a4b50"/>
  <rect x="1" y="15" width="11.5" height="12" rx="2" fill="#4a4b50"/>
  <rect x="15" y="15" width="12" height="12" rx="2" fill="#4a4b50"/>
  <path d="M21 1.5l5.5 5.5-5.5 5.5-5.5-5.5z" stroke="#4a4b50" stroke-width="1.8" fill="none"/>
</svg>
<div class="a bl" style="left:784px;top:36.5px">应用</div>
<!-- settings -->
<svg class="a" style="left:858px;top:6px" width="28" height="28" viewBox="0 0 28 28">
  <g transform="translate(14 14)" fill="#4a4b50">
   <circle r="10"/>
   <rect x="-3.5" y="-13.5" width="7" height="27" rx="1.5"/>
   <rect x="-3.5" y="-13.5" width="7" height="27" rx="1.5" transform="rotate(60)"/>
   <rect x="-3.5" y="-13.5" width="7" height="27" rx="1.5" transform="rotate(120)"/>
  </g>
  <circle cx="14" cy="14" r="4.5" fill="#fff"/>
</svg>
<div class="a bl" style="left:859px;top:36.5px">设置</div>
<!-- leave -->
<div class="a" style="left:1086px;top:8px;width:95px;height:45px;border:1px solid #f25353;border-radius:4px"></div>
<div class="a" style="left:1086px;top:20px;width:95px;text-align:center;font-size:16.8px;line-height:22px;color:#f24e4e">离开会议</div>

</div>

</div>
</body></html>
